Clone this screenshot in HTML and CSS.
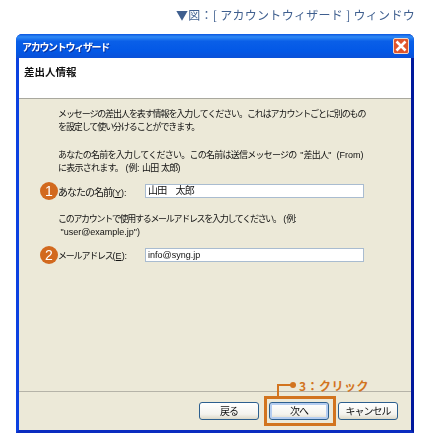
FILE: index.html
```html
<!DOCTYPE html>
<html lang="ja">
<head>
    <meta charset="UTF-8">
    <title>アカウントウィザード</title>
    <link rel="stylesheet" href="styles.css">
</head>
<body>
    <p class="caption">▼図：[ アカウントウィザード ] ウィンドウ</p>

    <div class="window">
        <div class="titlebar">
            <span class="title">アカウントウィザード</span>
            <span class="close">
                <svg width="14" height="14" viewBox="0 0 14 14"><path d="M2.5 2.5L11.5 11.5M11.5 2.5L2.5 11.5" stroke="#fff" stroke-width="2.6"/></svg>
            </span>
        </div>
        <div class="window-inner">
            <div class="header">差出人情報</div>
            <div class="content">
                <p class="text">メッセージの差出人を表す情報を入力してください。これはアカウントごとに別のもの<br>を設定して使い分けることができます。</p>
                <p class="text text-second">あなたの名前を入力してください。この名前は送信メッセージの <span class="latin">&nbsp;"</span>差出人<span class="latin">" &nbsp;(From)</span><br>に表示されます。<span class="latin">&nbsp;(</span>例<span class="latin">: </span>山田<span class="latin">&nbsp;</span>太郎<span class="latin">)</span></p>
                <div class="field">
                    <span class="badge">1</span>
                    <label class="field-label">あなたの名前<span class="latin">(<u>Y</u>):</span></label>
                    <div class="input input-name">山田　太郎</div>
                </div>
                <p class="text text-third">このアカウントで使用するメールアドレスを入力してください。<span class="latin">&nbsp;(</span>例<span class="latin">:</span><br><span class="latin">&nbsp;"user@example.jp")</span></p>
                <div class="field">
                    <span class="badge">2</span>
                    <label class="field-label label-kana">メールアドレス<span class="latin">(<u>E</u>):</span></label>
                    <div class="input">info@syng.jp</div>
                </div>
            </div>
            <div class="footer">
                <button class="btn">戻る</button>
                <button class="btn btn-default">次へ</button>
                <button class="btn">キャンセル</button>
            </div>
        </div>
    </div>

    <div class="callout">
        <span class="callout-line"></span>
        <span class="callout-dot"></span>
        <span class="callout-text">3：クリック</span>
    </div>
    <div class="highlight"></div>
</body>
</html>
```

FILE: styles.css
```css
* {
    margin: 0;
    padding: 0;
    box-sizing: border-box;
}

body {
    position: relative;
    width: 430px;
    height: 443px;
    overflow: hidden;
    background: white;
    font-family: "Noto Sans CJK JP", "Liberation Sans", sans-serif;
}

.caption {
    height: 34px;
    padding: 8px 15px 0 0;
    text-align: right;
    font-size: 12px;
    line-height: 14px;
    letter-spacing: 0.3px;
    color: #3f5f8f;
    white-space: nowrap;
    filter: blur(0.3px);
}

.window {
    width: 398px;
    height: 399px;
    margin-left: 16px;
    border-radius: 6px 6px 0 0;
    background: #0a3fdc;
    border-left: 3px solid #0b41e0;
    border-right: 3px solid #00189c;
    border-bottom: 3px solid #0a2cc0;
    display: flex;
    flex-direction: column;
    filter: blur(0.3px);
}

.titlebar {
    height: 24px;
    margin: 0 -3px;
    padding: 0 5px 0 6px;
    display: flex;
    align-items: center;
    justify-content: space-between;
    border-radius: 6px 6px 0 0;
    background: linear-gradient(180deg, #0a56e0 0%, #2f8af5 12%, #0a5fe8 30%, #0358e6 70%, #0a50d8 100%);
}

.title {
    color: white;
    font-size: 10px;
    font-weight: bold;
    letter-spacing: -1.3px;
    text-shadow: 1px 1px 0 #0a2f9c;
}

.close {
    width: 16px;
    height: 16px;
    display: flex;
    align-items: center;
    justify-content: center;
    border: 1px solid #f3d8c8;
    border-radius: 2px;
    background: #e0552c;
}

.window-inner {
    flex: 1;
    display: flex;
    flex-direction: column;
    background: #ece9d8;
}

.header {
    height: 41px;
    padding: 7px 0 0 5px;
    background: white;
    border-bottom: 1px solid #a9a89e;
    font-size: 10.5px;
    line-height: 14px;
    font-weight: bold;
    color: #111;
}

.content {
    flex: 1;
    padding: 9px 0 0 39px;
    font-size: 9px;
    color: #111;
}

.text {
    line-height: 12.5px;
    letter-spacing: -1.1px;
    white-space: nowrap;
}

.text-second {
    margin-top: 16px;
    letter-spacing: -0.75px;
}

.text-third {
    margin-top: 15px;
    letter-spacing: -1.3px;
}

.latin {
    font-family: "Liberation Sans", sans-serif;
    font-size: 9px;
    letter-spacing: 0;
}

.field {
    position: relative;
    height: 14px;
    margin-top: 10px;
    display: flex;
    align-items: center;
}

.field-label {
    width: 87px;
    font-size: 10px;
    letter-spacing: -1px;
    white-space: nowrap;
}

.label-kana {
    font-size: 9px;
    letter-spacing: -1.2px;
}

.input {
    width: 219px;
    height: 14px;
    padding-left: 2px;
    background: white;
    border: 1px solid #a9bcd0;
    font-size: 9px;
    line-height: 12px;
    color: #111;
    font-family: "Liberation Sans", "Noto Sans CJK JP", sans-serif;
}

.input-name {
    font-size: 10px;
    letter-spacing: -0.8px;
}

.badge {
    position: absolute;
    left: -18px;
    top: -2px;
    width: 18px;
    height: 18px;
    border-radius: 50%;
    background: #d2691e;
    color: white;
    font-family: "Liberation Sans", sans-serif;
    font-size: 14px;
    line-height: 18px;
    text-align: center;
}

.footer {
    height: 39px;
    padding: 10px 13px 0 0;
    display: flex;
    justify-content: flex-end;
    gap: 9px;
    border-top: 1px solid #b5b3a8;
}

.btn {
    width: 60px;
    height: 18px;
    border: 1px solid #2c5f8f;
    border-radius: 3px;
    background: linear-gradient(180deg, #fff 0%, #f4f3ee 70%, #dcd8c8 100%);
    font-family: inherit;
    font-size: 10px;
    line-height: 14px;
    letter-spacing: -1px;
    color: #111;
}

.btn-default {
    margin-left: 1px;
    box-shadow: inset 0 0 0 2px #b5cdf0;
}

.highlight {
    position: absolute;
    left: 264px;
    top: 396px;
    width: 72px;
    height: 30px;
    border: 3px solid #d2741f;
}

.callout {
    position: absolute;
    left: 277px;
    top: 378px;
    display: flex;
    align-items: center;
    height: 14px;
}

.callout-line {
    position: absolute;
    left: 0;
    top: 6px;
    width: 14px;
    height: 13px;
    border-left: 2px solid #d2741f;
    border-top: 2px solid #d2741f;
}

.callout-dot {
    position: absolute;
    left: 13px;
    top: 4px;
    width: 6px;
    height: 6px;
    border-radius: 50%;
    background: #d2741f;
}

.callout-text {
    margin-left: 22px;
    color: #d2741f;
    font-size: 12px;
    font-weight: bold;
    letter-spacing: 0.5px;
    white-space: nowrap;
}
```
